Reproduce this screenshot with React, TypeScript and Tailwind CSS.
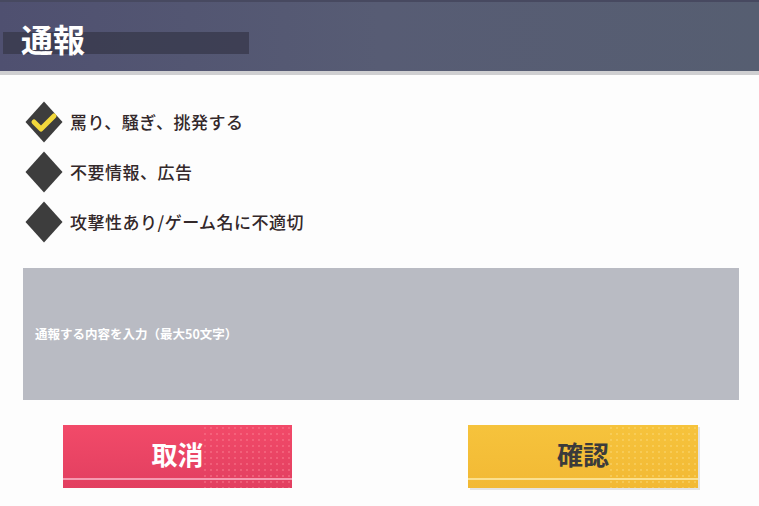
import React from "react";

const font = { fontFamily: '"Noto Sans CJK JP", "Noto Sans", sans-serif' };

function Diamond({ checked }: { checked?: boolean }) {
  return (
    <div className="relative w-[40px] h-[42px] flex items-center justify-center shrink-0">
      <svg width="40" height="42" viewBox="0 0 40 42">
        <polygon points="20,0.5 38.5,21 20,41.5 1.5,21" fill="#3d3d3d" />
        {checked && (
          <polyline
            points="10,21 17,28 30,15"
            fill="none"
            stroke="#f2d83c"
            strokeWidth="5"
            strokeLinecap="round"
            strokeLinejoin="round"
          />
        )}
      </svg>
    </div>
  );
}

function Row({ label, checked }: { label: string; checked?: boolean }) {
  return (
    <div className="flex items-center h-[50px] pl-[24px]">
      <Diamond checked={checked} />
      <span className="ml-[6px] text-[17px] font-medium text-[#33282a] tracking-[0.5px]">{label}</span>
    </div>
  );
}

export default function App() {
  return (
    <div className="w-[759px] h-[506px] bg-[#fdfdfd] overflow-hidden" style={font}>
      <div className="relative h-[71px] bg-gradient-to-r from-[#4f5070] via-[#575c74] to-[#565e71] border-t-[2px] border-[#474960]">
        <div className="absolute left-[3px] top-[30px] w-[246px] h-[22px] bg-[#383a4c]/80" />
        <div className="absolute left-[21px] top-[16px] text-[32px] font-bold text-white leading-[40px]">通報</div>
      </div>
      <div className="h-[4px] bg-[#cfcfd1]" />
      <div className="pt-[22px]">
        <Row label="罵り、騒ぎ、挑発する" checked />
        <Row label="不要情報、広告" />
        <Row label="攻撃性あり/ゲーム名に不適切" />
      </div>
      <div className="mt-[21px] ml-[23px] mr-[20px] h-[132px] bg-[#b9bbc3] flex items-center pl-[12px]">
        <span className="text-[12.5px] font-bold text-white">通報する内容を入力（最大50文字）</span>
      </div>
      <div className="mt-[25px] flex pl-[63px]">
        <div className="relative w-[229px] h-[63px] bg-gradient-to-b from-[#f24a69] to-[#e23f60] flex items-center justify-center overflow-hidden">
          <div className="absolute left-0 right-0 bottom-[8px] h-[2px] bg-[#f59bb0]" />
          <div className="absolute right-0 top-0 bottom-0 w-[90px] bg-[radial-gradient(circle,#f97a8e_1px,transparent_1.5px)] [background-size:6px_6px] opacity-50" />
          <span className="relative text-[26px] font-bold text-white pb-[6px]">取消</span>
        </div>
        <div className="relative ml-[176px] w-[230px] h-[63px] bg-gradient-to-b from-[#f6c33c] to-[#f2b934] flex items-center justify-center overflow-hidden shadow-[2px_2px_0_#e4e4e4]">
          <div className="absolute left-0 right-0 bottom-[8px] h-[2px] bg-[#fbe08e]" />
          <div className="absolute right-0 top-0 bottom-0 w-[90px] bg-[radial-gradient(circle,#fad774_1px,transparent_1.5px)] [background-size:6px_6px] opacity-50" />
          <span className="relative text-[26px] font-bold text-[#3b3b3b] pb-[6px]">確認</span>
        </div>
      </div>
    </div>
  );
}
